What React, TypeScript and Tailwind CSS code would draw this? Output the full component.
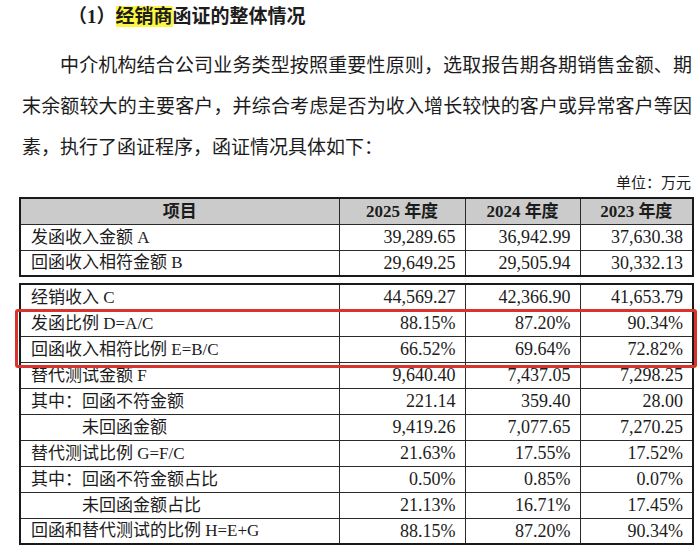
import React from 'react';

const cjk = '"Liberation Serif", "Noto Sans CJK SC", serif';

type Row = { label: string; indent?: boolean; v: [string, string, string] };

const topRows: Row[] = [
  { label: '发函收入金额 A', v: ['39,289.65', '36,942.99', '37,630.38'] },
  { label: '回函收入相符金额 B', v: ['29,649.25', '29,505.94', '30,332.13'] },
];

const bottomRows: Row[] = [
  { label: '经销收入 C', v: ['44,569.27', '42,366.90', '41,653.79'] },
  { label: '发函比例 D=A/C', v: ['88.15%', '87.20%', '90.34%'] },
  { label: '回函收入相符比例 E=B/C', v: ['66.52%', '69.64%', '72.82%'] },
  { label: '替代测试金额 F', v: ['9,640.40', '7,437.05', '7,298.25'] },
  { label: '其中：回函不符金额', v: ['221.14', '359.40', '28.00'] },
  { label: '未回函金额', indent: true, v: ['9,419.26', '7,077.65', '7,270.25'] },
  { label: '替代测试比例 G=F/C', v: ['21.63%', '17.55%', '17.52%'] },
  { label: '其中：回函不符金额占比', v: ['0.50%', '0.85%', '0.07%'] },
  { label: '未回函金额占比', indent: true, v: ['21.13%', '16.71%', '17.45%'] },
  { label: '回函和替代测试的比例 H=E+G', v: ['88.15%', '87.20%', '90.34%'] },
];

function Cols() {
  return (
    <colgroup>
      <col className="w-[319px]" />
      <col className="w-[126px]" />
      <col className="w-[115px]" />
      <col className="w-[113px]" />
    </colgroup>
  );
}

function DataRow({ row }: { row: Row }) {
  return (
    <tr className="h-[26px]">
      <td
        className={`border border-[#2a2a2a] text-[17px] leading-none ${row.indent ? 'pl-[61px]' : 'pl-[10px]'}`}
      >
        {row.label}
      </td>
      {row.v.map((x, i) => (
        <td key={i} className="border border-[#2a2a2a] pr-[9px] text-right text-[18px] leading-none">
          {x}
        </td>
      ))}
    </tr>
  );
}

export default function App() {
  return (
    <div
      className="relative w-[700px] h-[556px] overflow-hidden bg-white text-[#1c1c1c]"
      style={{ fontFamily: cjk }}
    >
      {/* 标题 */}
      <h1 className="pl-[68px] pt-[4px] text-[19px] font-bold leading-[26px]">
        （1）<span className="bg-[#fbf63f]">经销商</span>函证的整体情况
      </h1>

      {/* 正文 */}
      <div className="mt-[15px] pl-[22px] pr-[8px] text-[19px] leading-[41px]">
        <p className="pl-[38px] text-justify [text-align-last:justify]">
          中介机构结合公司业务类型按照重要性原则，选取报告期各期销售金额、期
        </p>
        <p className="text-justify [text-align-last:justify]">
          末余额较大的主要客户，并综合考虑是否为收入增长较快的客户或异常客户等因
        </p>
        <p>素，执行了函证程序，函证情况具体如下：</p>
      </div>

      <div className="mt-[5px] pr-[9px] text-right text-[15px] leading-[20px]">单位：万元</div>

      {/* 表格 */}
      <div className="mt-[4px] ml-[19px] w-[675px]">
        <table className="w-full table-fixed border-collapse border-2 border-[#1a1a1a]">
          <Cols />
          <tbody>
            <tr className="h-[26px] bg-[#cbcbcb] font-bold">
              <td className="border border-[#2a2a2a] text-center text-[17px] leading-none">项目</td>
              <td className="border border-[#2a2a2a] text-center text-[17px] leading-none">2025 年度</td>
              <td className="border border-[#2a2a2a] text-center text-[17px] leading-none">2024 年度</td>
              <td className="border border-[#2a2a2a] text-center text-[17px] leading-none">2023 年度</td>
            </tr>
            {topRows.map((r) => (
              <DataRow key={r.label} row={r} />
            ))}
          </tbody>
        </table>

        <table className="mt-[6px] w-full table-fixed border-collapse border-2 border-[#1a1a1a]">
          <Cols />
          <tbody>
            {bottomRows.map((r) => (
              <DataRow key={r.label} row={r} />
            ))}
          </tbody>
        </table>
      </div>

      {/* 红框 */}
      <div className="absolute left-[15px] top-[309px] w-[682px] h-[59px] rounded-[3px] border-[3px] border-[#d8332c]" />
    </div>
  );
}
